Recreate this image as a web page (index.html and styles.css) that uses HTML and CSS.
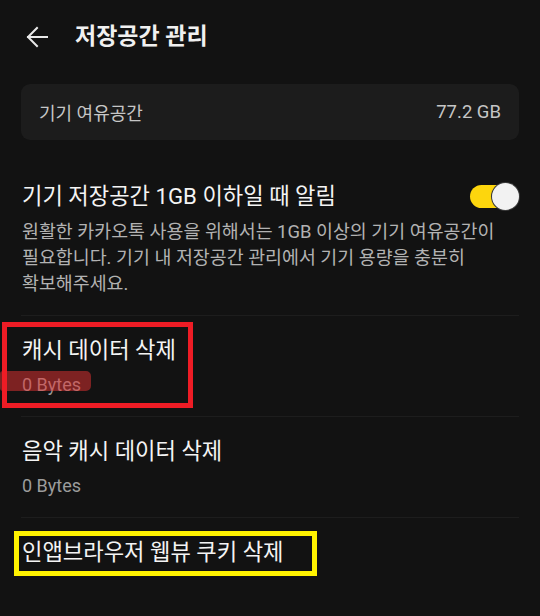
FILE: index.html
```html
<!DOCTYPE html>
<html lang="ko">
<head>
<meta charset="utf-8">
<link rel="stylesheet" href="styles.css">
</head>
<body>
<div class="page">
  <header class="header">
    <svg class="back" width="22" height="22" viewBox="0 0 22 22">
      <path d="M21 11 H2 M11 2 L2 11 L11 20" fill="none" stroke="#e8e8e8" stroke-width="2" stroke-linecap="square"/>
    </svg>
    <h1 class="title">저장공간 관리</h1>
  </header>
  <main class="content">
    <div class="card">
      <span class="card-label">기기 여유공간</span>
      <span class="card-value">77.2 GB</span>
    </div>
    <section class="toggle-section">
      <div class="toggle-row">
        <span class="item-title">기기 저장공간 1GB 이하일 때 알림</span>
        <span class="switch"><span class="knob"></span></span>
      </div>
      <p class="desc">원활한 카카오톡 사용을 위해서는 1GB 이상의 기기 여유공간이<br>필요합니다. 기기 내 저장공간 관리에서 기기 용량을 충분히<br>확보해주세요.</p>
    </section>
    <section class="item">
      <div class="item-title">캐시 데이터 삭제</div>
      <div class="item-sub">0 Bytes</div>
    </section>
    <section class="item">
      <div class="item-title">음악 캐시 데이터 삭제</div>
      <div class="item-sub">0 Bytes</div>
    </section>
    <section class="item last">
      <div class="item-title">인앱브라우저 웹뷰 쿠키 삭제</div>
    </section>
  </main>
  <div class="mark-highlight"></div>
  <div class="mark-red"></div>
  <div class="mark-yellow"></div>
</div>
</body>
</html>
```
FILE: styles.css
```css
* { box-sizing: border-box; margin: 0; padding: 0; }
html, body { background: #121212; }
body {
  font-family: Roboto, "Noto Sans CJK KR", sans-serif;
  color: #f2f2f2;
  width: 540px;
  height: 616px;
  overflow: hidden;
}
.page { position: relative; width: 540px; height: 616px; }
.header {
  height: 74px;
  display: flex;
  align-items: center;
  padding-left: 26px;
}
.back { display: block; margin-right: 27px; margin-top: -1px; }
.title {
  font-size: 23px;
  font-weight: 700;
  color: #f0f0f0;
  line-height: 28px;
}
.content { padding: 0 21px; margin-top: 10px; }
.card {
  height: 56px;
  background: #1c1c1c;
  border-radius: 9px;
  display: flex;
  align-items: center;
  justify-content: space-between;
  padding: 0 18px 0 18px;
  font-size: 18px;
  color: #c6c6c6;
}
.card-value { font-size: 18.5px; }
.toggle-section { padding: 41px 0 18px 1px; }
.toggle-row { display: flex; align-items: center; justify-content: space-between; }
.item-title { font-size: 22.2px; line-height: 28px; color: #f4f4f4; }
.switch {
  position: relative;
  width: 49px;
  height: 27px;
  display: block;
  margin-top: 2px;
}
.switch::before {
  content: "";
  position: absolute;
  left: 0; top: 2px;
  width: 44px; height: 23px;
  border-radius: 12px;
  background: #fdd60d;
}
.knob {
  position: absolute;
  right: 0; top: 0;
  width: 27px; height: 27px;
  border-radius: 50%;
  background: #f2f2f2;
  box-shadow: 0 0 0 1px #3a3a3a;
}
.desc {
  margin-top: 9px;
  font-size: 18.4px;
  line-height: 26px;
  color: #b2b2b2;
}
.item {
  border-top: 1px solid #1d1d1d;
  padding: 20px 0 18px 1px;
}
.item-sub {
  margin-top: 8px;
  font-size: 18px;
  line-height: 26px;
  color: #9c9c9c;
}
.mark-highlight {
  position: absolute;
  left: 0; top: 371px;
  width: 91px; height: 20px;
  border-radius: 3px 5px 5px 3px;
  background: rgba(232, 50, 50, 0.5);
}
.mark-red {
  position: absolute;
  left: 2px; top: 322px;
  width: 191px; height: 86px;
  border: 5px solid #ee1c25;
}
.mark-yellow {
  position: absolute;
  left: 14px; top: 531px;
  width: 303px; height: 45px;
  border: 5px solid #fff200;
}
```
